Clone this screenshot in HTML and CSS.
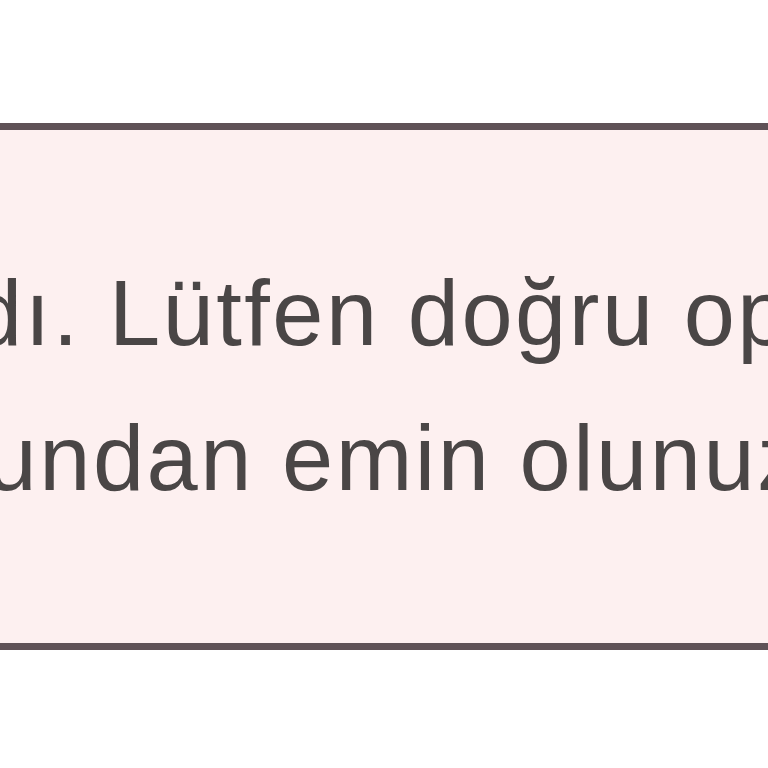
FILE: index.html
```html
<!DOCTYPE html>
<html lang="tr">
<head>
<meta charset="utf-8">
<link rel="stylesheet" href="styles.css">
</head>
<body>
<div class="page">
  <div class="alert">
    <p class="line line-1">bulunamadı. Lütfen doğru operatör</p>
    <p class="line line-2">olduğundan emin olunuz.</p>
  </div>
</div>
</body>
</html>
```

FILE: styles.css
```css
html, body {
  margin: 0;
  padding: 0;
  background: #ffffff;
}
.page {
  width: 768px;
  height: 768px;
  overflow: hidden;
  padding-top: 123px;
  box-sizing: border-box;
}
.alert {
  background: #fdf0f0;
  border-top: 7px solid #5f5257;
  border-bottom: 7px solid #5f5257;
  padding: 111px 0 112px;
  font-family: "Liberation Sans", Arial, sans-serif;
  font-size: 92px;
  line-height: 145px;
  letter-spacing: 2.5px;
  color: #4a4646;
  white-space: nowrap;
}
.line {
  margin: 0;
}
.line-1 {
  margin-left: -453px;
}
.line-2 {
  margin-left: -252px;
}
```
